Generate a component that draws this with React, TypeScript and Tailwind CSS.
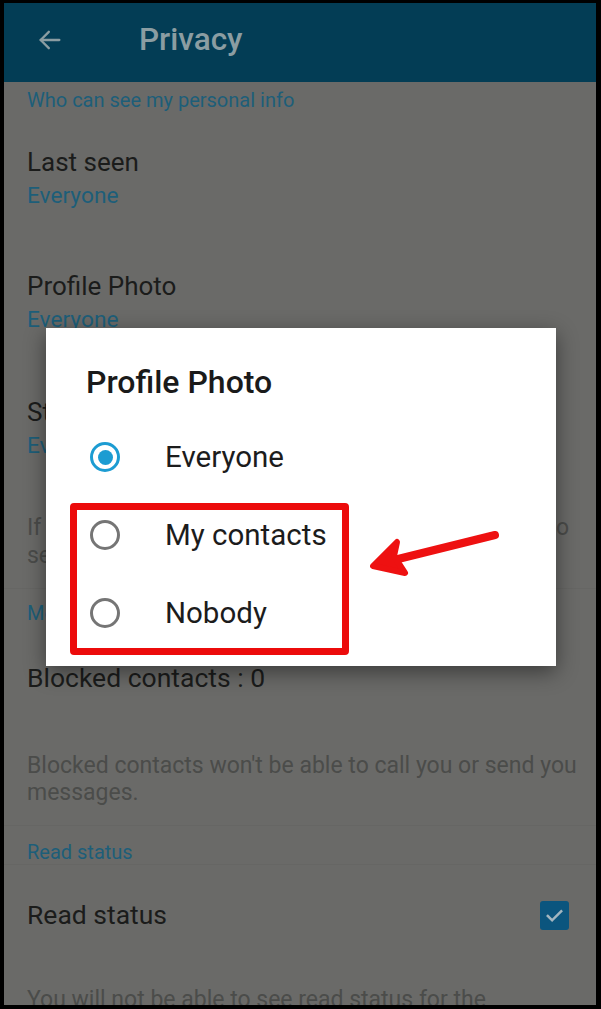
import React from "react";

const teal = "text-[#1d5e79]";

function Radio({ checked }: { checked?: boolean }) {
  return checked ? (
    <div className="w-[30px] h-[30px] rounded-full border-[3px] border-[#1c9cd2] flex items-center justify-center shrink-0">
      <div className="w-[15px] h-[15px] rounded-full bg-[#1c9cd2]" />
    </div>
  ) : (
    <div className="w-[30px] h-[30px] rounded-full border-[3px] border-[#757575] shrink-0" />
  );
}

function RadioRow({ label, checked }: { label: string; checked?: boolean }) {
  return (
    <div className="h-[78px] flex items-center pl-[44px]">
      <Radio checked={checked} />
      <span className="ml-[45px] text-[29.5px] leading-[36px] text-[#1c1c1c]">{label}</span>
    </div>
  );
}

function Item({ title, sub, pt }: { title: string; sub: string; pt: string }) {
  return (
    <div className={`h-[124px] px-[23px] ${pt}`}>
      <div className="text-[26px] leading-[30px] text-[#1b1c1b]">{title}</div>
      <div className={`mt-[6px] text-[22.7px] leading-[26px] ${teal}`}>{sub}</div>
    </div>
  );
}

export default function App() {
  return (
    <div
      className="w-[601px] h-[1009px] bg-black pl-[4px] pt-[3px] pr-[5px] pb-[4px]"
      style={{ fontFamily: "Roboto, 'Liberation Sans', sans-serif" }}
    >
      <div className="relative w-[592px] h-[1002px] overflow-hidden bg-[#6a6a68]">
        {/* App bar */}
        <div className="h-[79px] bg-[#033d55] flex items-center pb-[6px]">
          <svg
            width="28"
            height="28"
            viewBox="0 0 24 24"
            className="ml-[32px]"
            fill="none"
            stroke="#8b9da2"
            strokeWidth="2"
            strokeLinecap="round"
            strokeLinejoin="round"
          >
            <path d="M20 12H4" />
            <path d="M11 5l-7 7 7 7" />
          </svg>
          <span className="ml-[75px] text-[31.5px] leading-[36px] font-medium text-[#8b9da2]">Privacy</span>
        </div>

        {/* Section header */}
        <div className={`h-[36px] pt-[6px] px-[23px] text-[20px] leading-[24px] ${teal}`}>
          Who can see my personal info
        </div>

        <Item title="Last seen" sub="Everyone" pt="pt-[29px]" />
        <Item title="Profile Photo" sub="Everyone" pt="pt-[29px]" />
        <Item title="Status" sub="Everyone" pt="pt-[31px]" />

        <div className="h-[98px] pt-[24px] pl-[23px] pr-[18px] text-[23px] leading-[28px] text-[#4b4c4a]">
          If you don't share your Last Seen, you won't be able to see other people's Last Seen.
        </div>

        <div className={`h-[48px] pt-[12px] px-[23px] text-[20px] leading-[24px] border-t border-[#666664] ${teal}`}>
          Messaging
        </div>

        <div className="h-[84px] pt-[27px] px-[23px] text-[26.5px] leading-[30px] text-[#1b1c1b]">
          Blocked contacts : 0
        </div>

        <div className="h-[105px] pt-[32px] pl-[23px] pr-[18px] text-[23px] leading-[27px] text-[#4b4c4a]">
          Blocked contacts won't be able to call you or send you messages.
        </div>

        <div className={`h-[40px] pt-[14px] px-[23px] text-[20px] leading-[24px] border-t border-b border-[#666664] ${teal}`}>
          Read status
        </div>

        <div className="h-[100px] pt-[35px] pl-[23px] pr-[27px] flex items-start justify-between">
          <span className="text-[26.5px] leading-[30px] text-[#1b1c1b]">Read status</span>
          <div className="w-[29px] h-[29px] rounded-[3px] bg-[#0b557e] flex items-center justify-center mt-[1px]">
            <svg width="23" height="23" viewBox="0 0 24 24" fill="none" stroke="#a3b6c0" strokeWidth="2.6" strokeLinecap="square">
              <path d="M5 12.5l4.5 4.5L19 7.5" />
            </svg>
          </div>
        </div>

        <div className="pt-[21px] pl-[23px] pr-[18px] text-[23px] leading-[28px] text-[#4b4c4a]">
          You will not be able to see read status for the messages you send.
        </div>

        {/* Dialog */}
        <div className="absolute left-[42px] top-[325px] w-[510px] h-[338px] bg-white shadow-[0_6px_20px_rgba(0,0,0,0.45)]">
          <div className="pt-[36px] pl-[40px] h-[90px] text-[32px] leading-[36px] font-medium text-[#1a1a1a]">
            Profile Photo
          </div>
          <RadioRow label="Everyone" checked />
          <RadioRow label="My contacts" />
          <RadioRow label="Nobody" />

          <div className="absolute left-[24px] top-[175px] w-[279px] h-[152px] border-[7px] border-[#ec0b0b] rounded-[4px]" />
        </div>

        {/* Red arrow */}
        <svg
          className="absolute left-[356px] top-[507px]"
          width="150"
          height="80"
          viewBox="0 0 150 80"
        >
          <line x1="135" y1="25" x2="30" y2="51" stroke="#ee1111" strokeWidth="8" strokeLinecap="round" />
          <polygon
            points="13,56 37,32 34,46 45,63"
            fill="#ee1111"
            stroke="#ee1111"
            strokeWidth="6"
            strokeLinejoin="round"
          />
        </svg>
      </div>
    </div>
  );
}
